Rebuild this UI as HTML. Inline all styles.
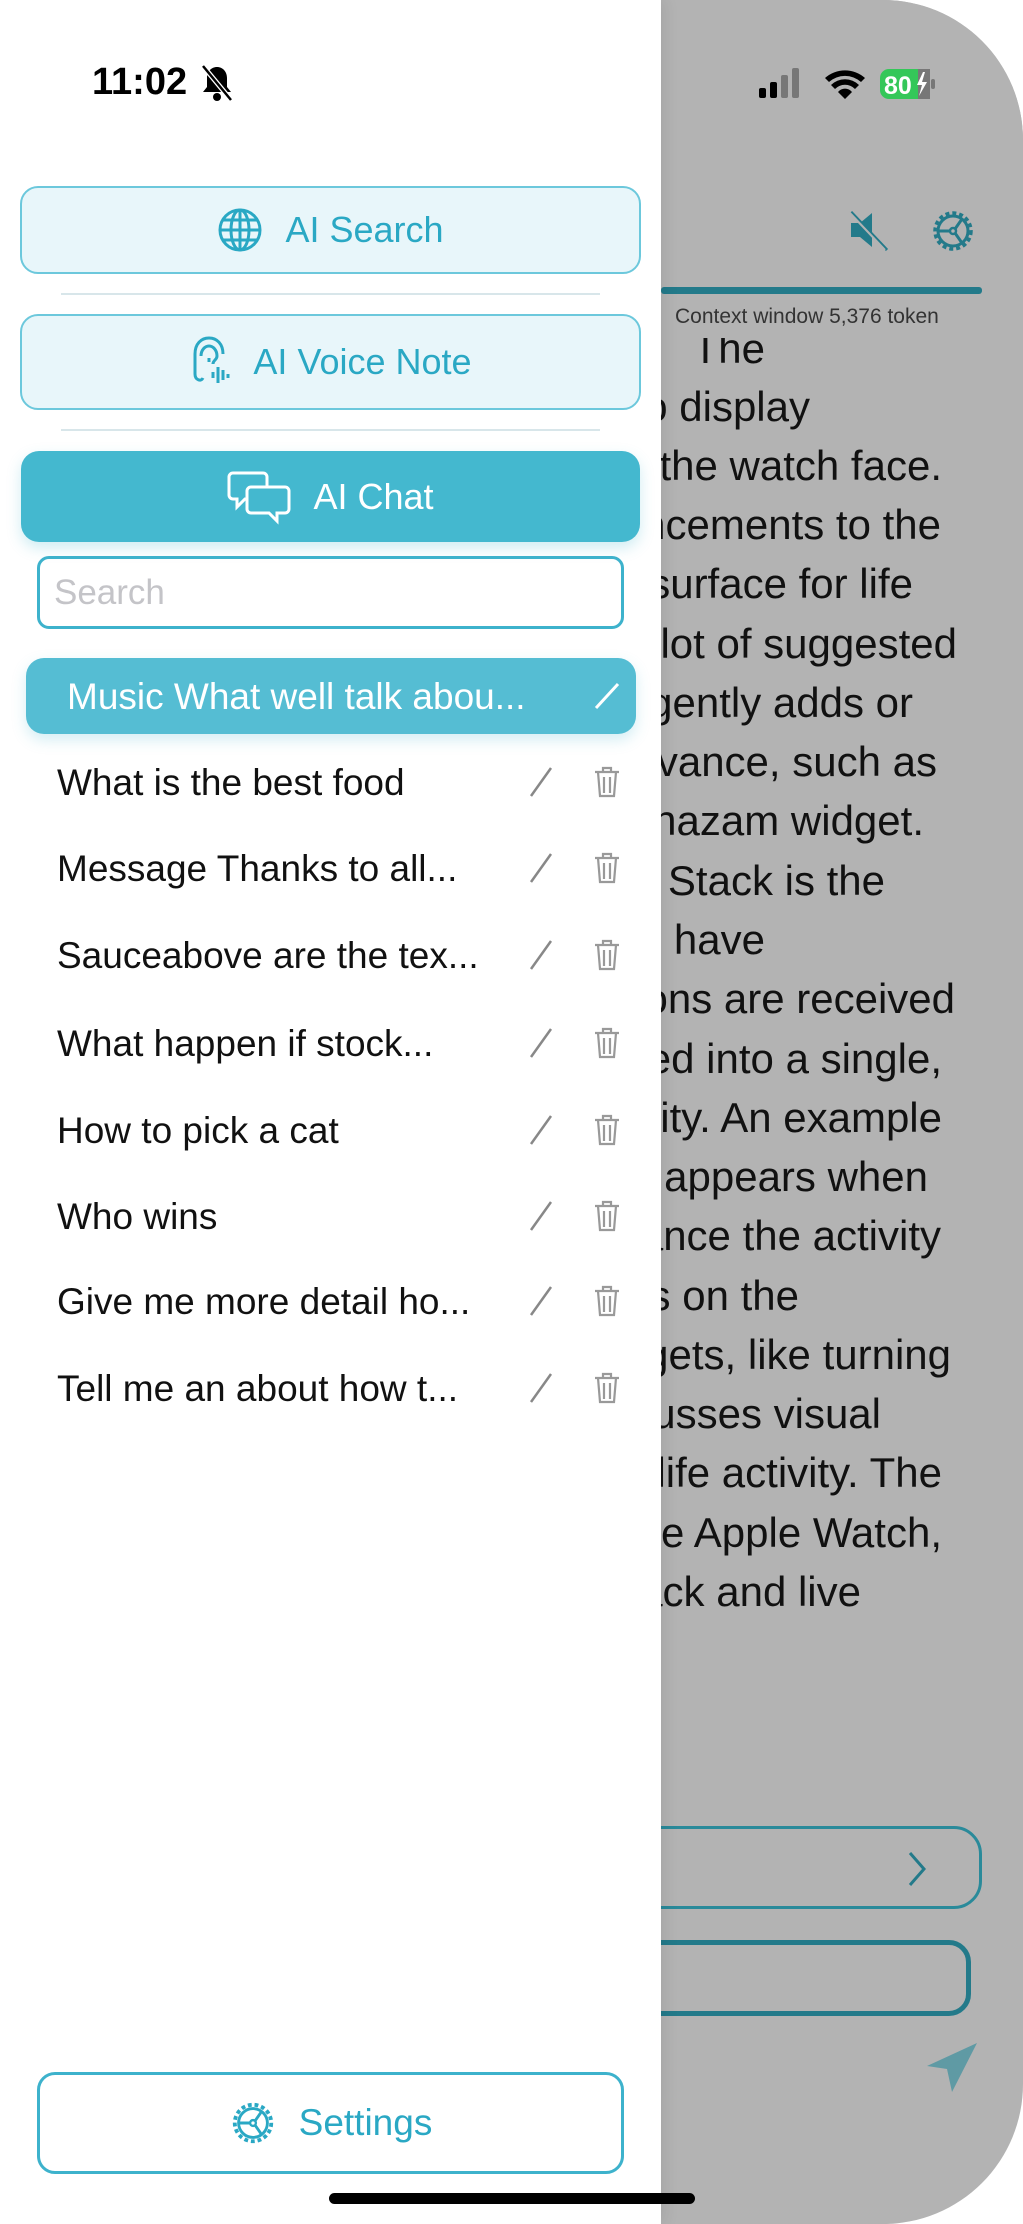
<!DOCTYPE html>
<html><head><meta charset="utf-8"><style>
*{margin:0;padding:0;box-sizing:border-box}
body{width:1023px;height:2224px;position:relative;overflow:hidden;background:#fff;font-family:"Liberation Sans",sans-serif}
.abs{position:absolute}
#right{left:600px;top:0;width:423px;height:2224px;background:#b3b3b3;border-top-right-radius:140px;border-bottom-right-radius:140px;overflow:hidden}
.rt{position:absolute;font-size:42px;color:#111;white-space:nowrap;line-height:1;text-align:right}
#drawer{left:0;top:0;width:661px;height:2224px;background:#fff;box-shadow:4px 0 14px rgba(0,0,0,.08);z-index:2}
.btn{position:absolute;border-radius:18px;display:flex;align-items:center;justify-content:center;font-size:36px;color:#2aa8c4;gap:22px}
.light{background:#e8f6fa;border:2px solid #6cc8dc}
.sep{position:absolute;left:61px;width:539px;height:2px;background:#d8e6ea}
.row{position:absolute;left:57px;font-size:37px;color:#111;line-height:1;white-space:nowrap}
.ic{position:absolute}
</style></head><body>
<div id="right" class="abs">
  <div class="rt" style="top:328px;right:258px">The</div>
  <div class="rt" style="top:386px;right:213px">to display</div>
  <div class="rt" style="top:445px;right:81px">on the watch face.</div>
  <div class="rt" style="top:504px;right:82px">enhancements to the</div>
  <div class="rt" style="top:563px;right:110px">a surface for life</div>
  <div class="rt" style="top:623px;right:66px">a lot of suggested</div>
  <div class="rt" style="top:682px;right:110px">intelligently adds or</div>
  <div class="rt" style="top:741px;right:86px">relevance, such as</div>
  <div class="rt" style="top:800px;right:99px">Shazam widget.</div>
  <div class="rt" style="top:860px;right:138px">Smart Stack is the</div>
  <div class="rt" style="top:919px;right:258px">have</div>
  <div class="rt" style="top:978px;right:68px">notifications are received</div>
  <div class="rt" style="top:1038px;right:81px">grouped into a single,</div>
  <div class="rt" style="top:1097px;right:81px">activity. An example</div>
  <div class="rt" style="top:1156px;right:95px">appears when</div>
  <div class="rt" style="top:1215px;right:82px">advance the activity</div>
  <div class="rt" style="top:1275px;right:224px">buttons on the</div>
  <div class="rt" style="top:1334px;right:72px">widgets, like turning</div>
  <div class="rt" style="top:1393px;right:142px">discusses visual</div>
  <div class="rt" style="top:1452px;right:81px">of the life activity. The</div>
  <div class="rt" style="top:1512px;right:81px">on the Apple Watch,</div>
  <div class="rt" style="top:1571px;right:162px">Smart Stack and live</div>
  <div class="abs" style="left:0;top:0;width:423px;height:338px;background:#b3b3b3"></div>
  <div class="abs" style="left:61px;top:287px;width:321px;height:7px;background:#237a8a;border-radius:3px"></div>
  <div class="abs" style="left:75px;top:305px;font-size:21px;color:#333">Context window 5,376 token</div>
  <svg class="abs" style="left:245px;top:206px" width="48" height="48" viewBox="0 0 48 48"><path d="M6 17h9l12-10v34L15 31H6z" fill="#237a8a"/><path d="M6 6l36 38" stroke="#237a8a" stroke-width="3"/><path d="M4 6l36 38" stroke="#b3b3b3" stroke-width="2"/></svg>
  <svg class="abs" style="left:328px;top:206px" width="50" height="50" viewBox="0 0 50 50"><circle cx="25" cy="25" r="18" fill="none" stroke="#237a8a" stroke-width="3.5" stroke-dasharray="4 3"/><circle cx="25" cy="25" r="15" fill="none" stroke="#237a8a" stroke-width="3"/><circle cx="25" cy="25" r="3" fill="none" stroke="#237a8a" stroke-width="2.5"/><path d="M22 25H11M27 23l7-10M27 27l7 10" stroke="#237a8a" stroke-width="3"/></svg>
  <div class="abs" style="left:20px;top:1826px;width:362px;height:83px;border:3px solid #2a8a9a;border-radius:28px"></div>
  <svg class="abs" style="left:302px;top:1849px" width="30" height="40"><path d="M8 4l14 16L8 36" fill="none" stroke="#237a8a" stroke-width="3"/></svg>
  <div class="abs" style="left:20px;top:1940px;width:351px;height:76px;border:5px solid #237a8a;border-radius:22px"></div>
  <svg class="abs" style="left:325px;top:2040px" width="55" height="55" viewBox="0 0 55 55"><path d="M52 3L2 26l20 3 5 23z" fill="#5f9aa4"/></svg>
</div>
<div id="drawer" class="abs">
  <div class="abs" style="left:92px;top:61px;font-size:38px;font-weight:bold;color:#000">11:02</div>
  <svg class="abs" style="left:200px;top:64px" width="34" height="38" viewBox="0 0 34 38"><path d="M17 3c-6 0-10 5-10 11v9l-4 5h28l-4-5v-9c0-6-4-11-10-11z" fill="#000"/><circle cx="17" cy="33" r="4" fill="#000"/><path d="M3 2l28 34" stroke="#fff" stroke-width="5"/><path d="M3 2l28 34" stroke="#000" stroke-width="2.5"/></svg>
  <div class="btn light" style="left:20px;top:186px;width:621px;height:88px"><svg width="46" height="46" viewBox="0 0 46 46" fill="none" stroke="#2aa8c4" stroke-width="3"><circle cx="23" cy="23" r="20"/><ellipse cx="23" cy="23" rx="9" ry="20"/><path d="M23 3v40M3 23h40M6 13h34M6 33h34"/></svg>AI Search</div>
  <div class="sep" style="top:293px"></div>
  <div class="btn light" style="left:20px;top:314px;width:621px;height:96px"><svg width="42" height="56" viewBox="0 0 42 56" fill="none" stroke="#2aa8c4" stroke-width="3"><path d="M6 40V20C6 10 12 4 20 4s14 6 14 16"/><path d="M12 22c0-6 4-10 8-10s8 4 8 10c0 4-4 4-4 8"/><path d="M20 24v4M6 40c0 6 6 8 8 4"/><path d="M24 38v6M29 33v16M34 36v10M39 40v4"/></svg>AI Voice Note</div>
  <div class="sep" style="top:429px"></div>
  <div class="btn" style="left:21px;top:451px;width:619px;height:91px;background:#44b8cf;color:#fff;box-shadow:0 6px 14px rgba(68,184,207,.25)"><svg width="64" height="56" viewBox="0 0 64 56" fill="none" stroke="#fff" stroke-width="3"><path d="M6 4h30a4 4 0 0 1 4 4v18a4 4 0 0 1-4 4H18l-8 8v-8H6a4 4 0 0 1-4-4V8a4 4 0 0 1 4-4z"/><path d="M24 18h34a4 4 0 0 1 4 4v18a4 4 0 0 1-4 4h-8v8l-8-8H24a4 4 0 0 1-4-4V22a4 4 0 0 1 4-4z" fill="#44b8cf"/></svg>AI Chat</div>
  <div class="abs" style="left:37px;top:556px;width:587px;height:73px;border:3px solid #3db2cc;border-radius:12px;font-size:35px;color:#c4c4c8;padding:14px 14px">Search</div>
  <div class="abs" style="left:26px;top:658px;width:610px;height:76px;background:#55bdd3;border-radius:18px;box-shadow:0 6px 14px rgba(85,189,211,.25)"></div>
  <div class="row" style="left:67px;top:678px;color:#fff">Music What well talk abou...</div>
  <svg class="ic" style="left:592px;top:680px" width="30" height="32"><path d="M4 28L26 4" stroke="#fff" stroke-width="3"/></svg>
  <div class="row" style="top:764px">What is the best food</div>
  <div class="row" style="top:850px">Message Thanks to all...</div>
  <div class="row" style="top:937px">Sauceabove are the tex...</div>
  <div class="row" style="top:1025px">What happen if stock...</div>
  <div class="row" style="top:1112px">How to pick a cat</div>
  <div class="row" style="top:1198px">Who wins</div>
  <div class="row" style="top:1283px">Give me more detail ho...</div>
  <div class="row" style="top:1370px">Tell me an about how t...</div>
  <svg class="abs" style="left:0;top:0" width="661" height="1420">
    <defs><g id="pe"><path d="M-10 14L10-14" stroke="#888" stroke-width="2.5"/></g>
    <g id="tr" fill="none" stroke="#999" stroke-width="2.2"><path d="M-12-10h24M-4-10v-4h8v4M-9-10l2 24h14l2-24M-3-5v16M3-5v16"/></g></defs>
    <use href="#pe" x="541" y="782"/><use href="#tr" x="607" y="782"/>
    <use href="#pe" x="541" y="868"/><use href="#tr" x="607" y="868"/>
    <use href="#pe" x="541" y="955"/><use href="#tr" x="607" y="955"/>
    <use href="#pe" x="541" y="1043"/><use href="#tr" x="607" y="1043"/>
    <use href="#pe" x="541" y="1130"/><use href="#tr" x="607" y="1130"/>
    <use href="#pe" x="541" y="1216"/><use href="#tr" x="607" y="1216"/>
    <use href="#pe" x="541" y="1301"/><use href="#tr" x="607" y="1301"/>
    <use href="#pe" x="541" y="1388"/><use href="#tr" x="607" y="1388"/>
  </svg>
  <div class="btn" style="left:37px;top:2072px;width:587px;height:102px;border:3px solid #3db2cc;background:#fff;font-size:37px"><svg width="48" height="48" viewBox="0 0 50 50"><circle cx="25" cy="25" r="19" fill="none" stroke="#2aa8c4" stroke-width="4" stroke-dasharray="4 3"/><circle cx="25" cy="25" r="15" fill="none" stroke="#2aa8c4" stroke-width="3"/><circle cx="25" cy="25" r="3" fill="none" stroke="#2aa8c4" stroke-width="2.5"/><path d="M22 25H11M27 23l7-10M27 27l7 10" stroke="#2aa8c4" stroke-width="3"/></svg>Settings</div>
</div>
<svg class="abs" style="left:755px;top:66px;z-index:3" width="190" height="38">
  <rect x="4" y="22" width="7" height="10" rx="2" fill="#000"/><rect x="15" y="16" width="7" height="16" rx="2" fill="#000"/><rect x="26" y="9" width="7" height="23" rx="2" fill="#777"/><rect x="37" y="2" width="7" height="30" rx="2" fill="#777"/>
  <path d="M70 12a30 30 0 0 1 40 0l-4 4a24 24 0 0 0-32 0z M76 19a20 20 0 0 1 28 0l-4 4a14 14 0 0 0-20 0z M83 26a9 9 0 0 1 14 0l-7 7z" fill="#000"/>
  <rect x="125" y="3" width="50" height="30" rx="9" fill="#34c759"/><rect x="163" y="3" width="12" height="30" fill="#777"/><rect x="176" y="13" width="4" height="10" rx="2" fill="#777"/>
  <text x="129" y="28" font-family="Liberation Sans" font-weight="bold" font-size="25" fill="#fff">80</text>
  <path d="M168 6l-6 13h5l-3 11 8-14h-5l3-10z" fill="#fff"/>
</svg>
<div class="abs" style="left:329px;top:2193px;width:366px;height:11px;background:#000;border-radius:6px;z-index:3"></div>
</body></html>
